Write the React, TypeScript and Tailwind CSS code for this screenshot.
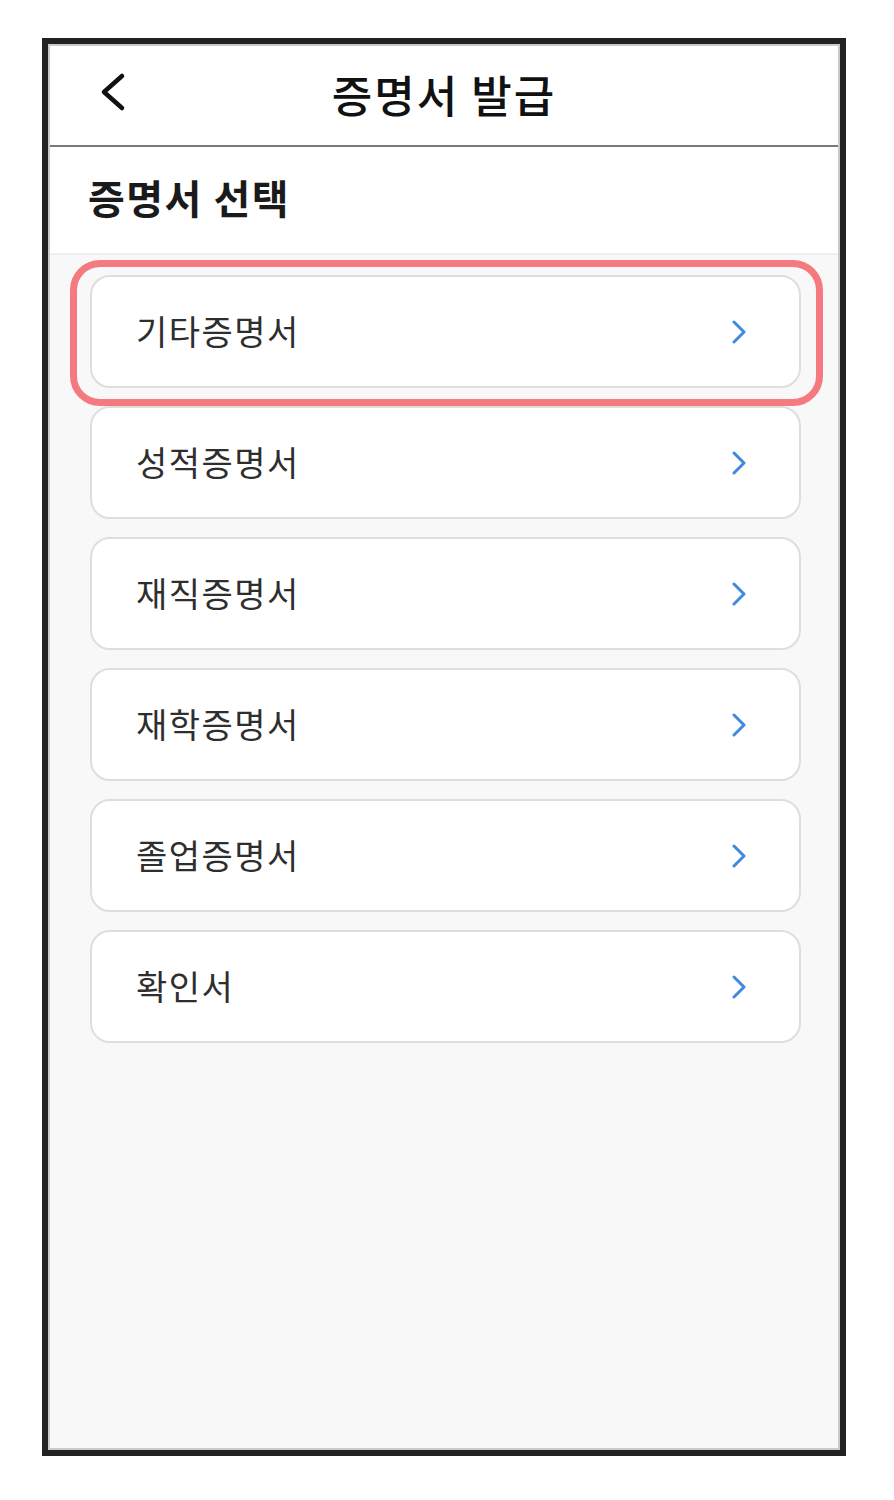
const items = ['기타증명서', '성적증명서', '재직증명서', '재학증명서', '졸업증명서', '확인서']

export default function App() {
  return (
    <div className="min-h-[1500px] bg-white pt-[38px] pl-[42px] font-['Noto_Sans_CJK_KR','Noto_Sans',sans-serif]">
      <div className="w-[804px] h-[1418px] border-[6px] border-[#222]">
        <div className="h-full flex flex-col border-2 border-[#c9c9c9] bg-[#f8f8f8]">
          {/* header */}
          <div className="relative h-[101px] flex items-center justify-center bg-white border-b-2 border-[#7a7a7a]">
            <button className="absolute left-[48px] top-[26px]">
              <svg width="32" height="40" viewBox="0 0 32 40" fill="none" stroke="#111" strokeWidth="4.5" strokeLinecap="round" strokeLinejoin="round">
                <path d="M24 4 L6 20 L24 36" />
              </svg>
            </button>
            <h1 className="text-[44px] font-medium text-[#111] tracking-[2px] -mt-[4px]">증명서 발급</h1>
          </div>

          <div className="h-[108px] flex items-center bg-white border-b-2 border-[#efefef] pl-[38px]">
            <h2 className="text-[40px] font-bold text-[#1a1a1a] tracking-[1.5px] -mt-[6px]">증명서 선택</h2>
          </div>

          {/* list */}
          <div className="flex flex-col gap-[18px] pl-[40px] pr-[37px] pt-[20px]">
            {items.map((label, i) => (
              <div key={label} className="relative">
                {i === 0 && (
                  <div className="absolute -top-[15px] -bottom-[18px] -left-[20px] -right-[22px] rounded-[30px] border-[7px] border-[#f47a80] pointer-events-none" />
                )}
                <button className="w-full h-[113px] flex items-center justify-between bg-white border-2 border-[#dedede] rounded-[20px] pl-[44px] pr-[52px]">
                  <span className="text-[34px] text-[#2e2e2e] tracking-[1.5px] -mt-[2px]">{label}</span>
                  <svg width="16" height="24" viewBox="0 0 16 24" fill="none" stroke="#3d8ae0" strokeWidth="3" strokeLinecap="round" strokeLinejoin="round">
                    <path d="M3 2 L13 12 L3 22" />
                  </svg>
                </button>
              </div>
            ))}
          </div>
        </div>
      </div>
    </div>
  )
}
